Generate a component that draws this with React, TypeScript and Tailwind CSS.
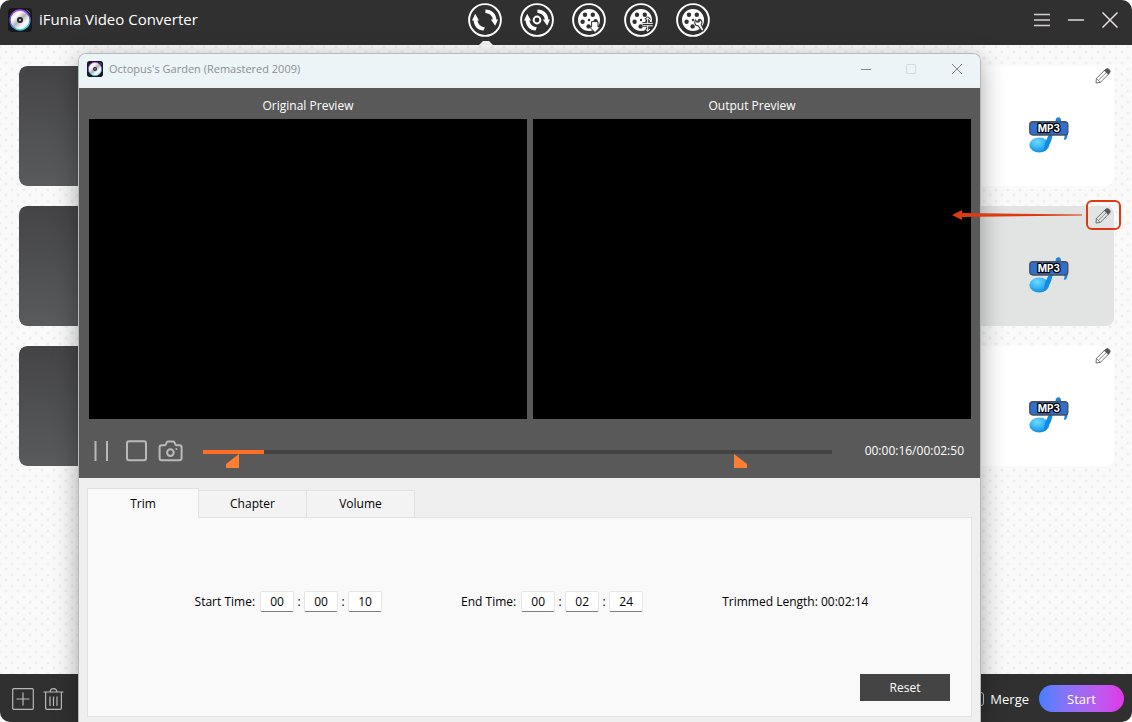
import { useState } from "react";
import type { ReactNode } from "react";

const DURATION = 170;

type Tool = {
  label: string;
  glyph: ReactNode;
};

function FilmDisc() {
  return (
    <>
      <circle cx="17" cy="17" r="11" fill="#fff" />
      <circle cx="17" cy="17" r="1.2" fill="#303030" />
      <circle cx="13" cy="11.8" r="2.2" fill="#303030" />
      <circle cx="20.8" cy="11.8" r="2.2" fill="#303030" />
      <circle cx="10.6" cy="18.8" r="2.2" fill="#303030" />
      <circle cx="16.6" cy="23.4" r="2.2" fill="#303030" />
      <circle cx="23.6" cy="18.2" r="2.2" fill="#303030" />
    </>
  );
}

function TurningArrows() {
  return (
    <>
      <path d="M5.6 16.8 C5.6 23 10 27.4 15.6 27.6 L16.8 24.2 C12.6 24 9.6 20.8 9.4 16.8 Z" />
      <path d="M4 17.4 L7.2 10.8 L11 17.4 Z" />
      <path d="M17.4 6.6 C23.8 6.6 28.4 11 28.4 17 L24.8 17 C24.8 13 21.8 10.4 17.4 10 Z" />
      <path d="M22.8 16.4 L30 16.4 L27.2 22.8 Z" />
    </>
  );
}

const tools: Tool[] = [
  { label: "Convert", glyph: <TurningArrows /> },
  {
    label: "Convert disc",
    glyph: (
      <>
        <TurningArrows />
        <circle cx="17" cy="17" r="5.6" fill="#303030" />
        <circle cx="17" cy="17" r="3.4" fill="none" stroke="#fff" strokeWidth="2" />
      </>
    ),
  },
  {
    label: "Download",
    glyph: (
      <>
        <FilmDisc />
        <path
          d="M19.6 18.6 H26 V24 H28.4 L23 29.6 L17.6 24 H19.6 Z"
          fill="#fff"
          stroke="#303030"
          strokeWidth="1"
        />
      </>
    ),
  },
  {
    label: "Compress",
    glyph: (
      <>
        <FilmDisc />
        <g fill="none" strokeLinejoin="round">
          <path
            d="M18.6 20.4 H28.8 M18.6 22.8 H28.8 M23.7 14.6 V20 M23.7 23 V28.6 M21.4 17 L23.7 14.8 L26 17 M21.4 26 L23.7 28.2 L26 26"
            stroke="#303030"
            strokeWidth="2.6"
          />
          <path
            d="M18.6 20.4 H28.8 M18.6 22.8 H28.8 M23.7 14.8 V20 M23.7 23 V28.2 M21.4 17 L23.7 14.8 L26 17 M21.4 26 L23.7 28.2 L26 26"
            stroke="#fff"
            strokeWidth="1"
          />
        </g>
      </>
    ),
  },
  {
    label: "Toolbox",
    glyph: (
      <>
        <FilmDisc />
        <path
          d="M19.6 17 L21 19.2 L23.2 18.8 L23.4 16.6 C26 17 26.6 19.8 25.2 21.6 L27.8 26.6 C27.6 28.2 26 28.4 25.2 27.4 L22.2 22.8 C19.2 23 17.6 19.6 19.6 17 Z"
          fill="#fff"
          stroke="#303030"
          strokeWidth="1.1"
        />
      </>
    ),
  },
];

function DiscLogo({ className, id }: { className: string; id: string }) {
  return (
    <svg viewBox="0 0 24 24" className={className} aria-hidden="true">
      <defs>
        <linearGradient id={`${id}-ring`} x1="0" y1="0" x2="0.3" y2="1">
          <stop offset="0" stopColor="#c04cf0" />
          <stop offset="0.5" stopColor="#6a49e8" />
          <stop offset="1" stopColor="#2ec4e0" />
        </linearGradient>
        <linearGradient id={`${id}-face`} x1="0" y1="0" x2="1" y2="1">
          <stop offset="0" stopColor="#b9bcc2" />
          <stop offset="0.3" stopColor="#ffffff" />
          <stop offset="0.5" stopColor="#b4b4b8" />
          <stop offset="0.7" stopColor="#ffffff" />
          <stop offset="1" stopColor="#b9bcc2" />
        </linearGradient>
      </defs>
      <rect width="24" height="24" rx="4" fill="#17181c" />
      <circle cx="12" cy="12" r="10" fill={`url(#${id}-face)`} stroke={`url(#${id}-ring)`} strokeWidth="1.4" />
      <circle cx="12" cy="12" r="3" fill="#22242c" />
      <circle cx="12" cy="12" r="1" fill="#d8d8dc" />
      <path d="M18.5 2 Q21 3 22 5.4" fill="none" stroke="#8a8a90" strokeWidth="0.8" />
    </svg>
  );
}

function PencilIcon() {
  return (
    <svg viewBox="0 0 16 16" className="size-4" fill="none" stroke="#636363" strokeWidth="0.9" aria-hidden="true">
      <path d="M1 15 L1.4 10.4 L10.2 1.8 L14 5.6 L5.4 14.4 Z" strokeLinejoin="round" />
      <path d="M1.4 10.4 L5.4 14.4 M3.4 12.4 L12 3.9" strokeWidth="0.7" />
      <path d="M9.4 2.6 L11.2 0.9 Q12.6 0 13.8 1.2 L14.7 2.1 Q15.8 3.4 14.8 4.6 L13.2 6.4 Z" fill="#555555" />
    </svg>
  );
}

function Mp3Icon({ id }: { id: string }) {
  return (
    <svg viewBox="-1 -1 42 38" className="h-[38px] w-[42px]" role="img" aria-label="MP3">
      <defs>
        <radialGradient id={id} cx="0.4" cy="0.3" r="0.8">
          <stop offset="0" stopColor="#6fdcff" />
          <stop offset="0.5" stopColor="#35b4f4" />
          <stop offset="1" stopColor="#0a7fd6" />
        </radialGradient>
      </defs>
      <path d="M26.6 3 Q27 0.2 29.6 0.2 Q32 0.4 32 3.6 Q32.4 8 37 12 Q40.4 17 37 22.4 L34.8 22.8 Q37 17 33 14 L27 14 Z" fill="#1587dc" />
      <path d="M27 5 L16 28 L19.4 30 Q22.6 24 24 17 Z" fill="#1587dc" />
      <ellipse cx="10.2" cy="28" rx="9.8" ry="7.6" fill={`url(#${id})`} />
      <path d="M14.6 34.4 Q20 31 23.4 18 L19.6 18 L16 26 Z" fill="#128be0" />
      <rect x="0.8" y="4.8" width="38" height="13.2" rx="3" fill="#2f6fcd" stroke="#4a4f5a" strokeWidth="1.4" />
      <text
        x="19.8"
        y="15"
        textAnchor="middle"
        fontFamily="Inter, sans-serif"
        fontSize="10"
        fontWeight="700"
        fill="#fff"
        stroke="#000"
        strokeWidth="2.4"
        paintOrder="stroke"
        strokeLinejoin="round"
      >
        MP3
      </text>
    </svg>
  );
}

function Header() {
  return (
    <header className="grid h-[45px] shrink-0 grid-cols-[10fr_242px_9fr] bg-[#303030]">
      <div className="flex items-start gap-[7px] pt-2 pl-2">
        <DiscLogo id="app" className="size-6" />
        <h1 className="mt-px text-[15px] leading-5 text-white">iFunia Video Converter</h1>
      </div>
      <nav className="flex items-start justify-between pt-[3px]" aria-label="Tools">
        {tools.map((tool, index) => (
          <button key={tool.label} type="button" aria-label={tool.label} className="relative h-[42px] w-[34px]">
            <svg viewBox="0 0 34 34" className="absolute top-0 size-[34px]" fill="#fff">
              <circle cx="17" cy="17" r="15.9" fill="none" stroke="#fff" strokeWidth="1.9" />
              {tool.glyph}
            </svg>
            {index === 0 && (
              <svg viewBox="0 0 14 4" className="absolute bottom-0 left-[11px] h-1 w-3.5" fill="#f4f4f4">
                <path d="M0 4 L4 0 H10 L14 4 Z" />
              </svg>
            )}
          </button>
        ))}
      </nav>
      <div className="flex items-center justify-end gap-[18px] pr-3.5 pb-[5px]">
        <button type="button" aria-label="Menu">
          <svg viewBox="0 0 16 16" className="size-4" stroke="#d6cfcf" strokeWidth="1.4">
            <path d="M0 2.5 H16 M0 8 H16 M0 13.5 H16" />
          </svg>
        </button>
        <button type="button" aria-label="Minimize">
          <svg viewBox="0 0 16 16" className="size-4" stroke="#b5aeae" strokeWidth="2">
            <path d="M0 8 H16" />
          </svg>
        </button>
        <button type="button" aria-label="Close">
          <svg viewBox="0 0 16 16" className="size-4" stroke="#e6dfdf" strokeWidth="1.5">
            <path d="M0.5 0.5 L15.5 15.5 M15.5 0.5 L0.5 15.5" />
          </svg>
        </button>
      </div>
    </header>
  );
}

function MediaRow({ id, selected }: { id: string; selected: boolean }) {
  return (
    <li className={`flex h-[120px] overflow-hidden rounded-lg ${selected ? "bg-[#e2e4e3]" : "bg-white"}`}>
      <div className="w-40 rounded-lg bg-linear-to-b from-[#444446] to-[#5a5b5d]" />
      <div className="ml-auto flex w-[130px] flex-col items-center gap-8 pt-0.5">
        <button type="button" aria-label="Edit" className="mr-[3px] self-end">
          <PencilIcon />
        </button>
        <Mp3Icon id={id} />
      </div>
    </li>
  );
}

function Footer() {
  return (
    <footer className="flex h-12 shrink-0 items-center bg-[#303030] pt-px pr-2 pl-3 text-white">
      <button type="button" aria-label="Add file">
        <svg viewBox="0 0 22 22" className="size-[22px]" fill="none" stroke="#b8b8b8" strokeWidth="1.2">
          <rect x="0.7" y="0.7" width="20.6" height="20.6" rx="1" />
          <path d="M4.5 11 H17.5 M11 4.5 V17.5" />
        </svg>
      </button>
      <button type="button" aria-label="Delete" className="ml-[9px]">
        <svg viewBox="0 0 22 22" className="size-[22px]" fill="none" stroke="#b8b8b8" strokeWidth="1.2">
          <path d="M0.5 4 H20.5 M2.6 4 V20 Q2.6 21.4 4 21.4 H17 Q18.4 21.4 18.4 20 V4 M7 4 Q7.4 0.7 10.5 0.7 Q13.6 0.7 14 4" />
          <path d="M7 8.5 V18 M10.5 8.5 V18 M14 8.5 V18" />
        </svg>
      </button>
      <label className="ml-auto flex items-center gap-1.5 text-[13px] leading-5">
        <input
          type="checkbox"
          className="size-3.5 appearance-none rounded-[3px] border border-[#c8c8c8] checked:bg-[#4080ff]"
        />
        Merge
      </label>
      <button
        type="button"
        className="ml-2.5 h-[27px] w-[85px] rounded-full bg-linear-to-r from-[#4080ff] to-[#e035e8] text-[13px] leading-5"
      >
        Start
      </button>
    </footer>
  );
}

function PlayerControls() {
  const [current, setCurrent] = useState(16.5);
  const start = 9.7;
  const end = 143.5;
  const played = (current / DURATION) * 100;

  return (
    <div className="flex h-[59px] items-center pt-[5px] pr-[7px] pl-1">
      <div className="flex items-center text-[#b9b9b9]">
        <button type="button" aria-label="Pause">
          <svg viewBox="0 0 18 24" className="h-6 w-[18px]" fill="none" stroke="currentColor" strokeWidth="2">
            <path d="M2.5 2 V22 M14 2 V22" />
          </svg>
        </button>
        <button type="button" aria-label="Stop" className="ml-3.5">
          <svg viewBox="0 0 24 24" className="size-6" fill="none" stroke="currentColor" strokeWidth="2">
            <rect x="2" y="2.2" width="19" height="19" rx="2" />
          </svg>
        </button>
        <button type="button" aria-label="Snapshot" className="ml-2">
          <svg viewBox="0 0 26 24" className="h-6 w-[26px]" fill="none" stroke="currentColor" strokeWidth="2">
            <path
              d="M4.6 6.2 H7.6 Q8.6 6.2 9 5.1 L9.6 3.5 Q10 2.5 11 2.5 H16.2 Q17.2 2.5 17.6 3.5 L18.2 5.1 Q18.6 6.2 19.6 6.2 H22.6 Q24.6 6.2 24.6 8.2 V19.3 Q24.6 21.3 22.6 21.3 H4.6 Q2.6 21.3 2.6 19.3 V8.2 Q2.6 6.2 4.6 6.2 Z"
              strokeLinejoin="round"
            />
            <circle cx="13.4" cy="13.6" r="3.3" />
            <circle cx="19.4" cy="10.1" r="1" fill="currentColor" stroke="none" />
          </svg>
        </button>
      </div>
      <div className="relative mt-0.5 ml-5 flex h-1 flex-1">
        <input
          type="range"
          aria-label="Position"
          min={0}
          max={DURATION}
          step={0.5}
          value={current}
          onChange={(event) => setCurrent(Number(event.target.value))}
          className="h-1 w-full appearance-none [&::-webkit-slider-thumb]:size-0 [&::-webkit-slider-thumb]:appearance-none"
          style={{ background: `linear-gradient(to right, #ff6e22 ${played}%, #444444 ${played}%)` }}
        />
        <svg
          viewBox="0 0 13 14"
          className="absolute top-1 h-3.5 w-[13px] -translate-x-full"
          style={{ left: `${(start / DURATION) * 100}%` }}
          fill="#ff7f32"
        >
          <path d="M13 0 V14 H0 V10 Z" />
        </svg>
        <svg
          viewBox="0 0 13 14"
          className="absolute top-1 h-3.5 w-[13px]"
          style={{ left: `${(end / DURATION) * 100}%` }}
          fill="#ff7f32"
        >
          <path d="M0 0 V14 H13 V10 Z" />
        </svg>
      </div>
      <output className="ml-[33px] text-[12px] leading-4 whitespace-nowrap">00:00:16/00:02:50</output>
    </div>
  );
}

type TimeFieldProps = {
  label: string;
  values: string[];
};

function TimeField({ label, values }: TimeFieldProps) {
  return (
    <fieldset className="flex items-center">
      <legend className="float-left mr-[5px] whitespace-nowrap">{label}:</legend>
      {values.map((value, index) => (
        <span key={index} className="flex items-center">
          {index > 0 && <span className="w-2.5 text-center">:</span>}
          <input
            type="text"
            aria-label={`${label} ${["hours", "minutes", "seconds"][index]}`}
            defaultValue={value}
            className="h-[21px] w-[34px] rounded-xs border border-[#e6e6e6] border-b-[#7c7c7c] bg-white text-center text-[12px] leading-4"
          />
        </span>
      ))}
    </fieldset>
  );
}

const tabs = ["Trim", "Chapter", "Volume"];

function TrimSettings() {
  const [active, setActive] = useState("Trim");

  return (
    <div className="flex flex-1 flex-col bg-[#efefef] px-2 pt-2.5 pb-[5px]">
      <div role="tablist" className="relative flex items-end">
        {tabs.map((tab) => (
          <button
            key={tab}
            type="button"
            role="tab"
            aria-selected={tab === active}
            onClick={() => setActive(tab)}
            className={
              tab === active
                ? "-mb-px h-[30px] w-[112px] border border-b-0 border-[#e2e2e2] bg-[#f9f9f9]"
                : "h-[27px] w-[108px] border-t border-r border-[#e2e2e2] bg-[#f3f3f3]"
            }
          >
            {tab}
          </button>
        ))}
      </div>
      <div role="tabpanel" className="flex flex-1 flex-col border border-[#e2e2e2] bg-[#f9f9f9] pt-[73px] pr-[21px] pb-[15px] pl-[25px]">
        <div className="flex items-center justify-center gap-[79px]">
          <TimeField label="Start Time" values={["00", "00", "10"]} />
          <TimeField label="End Time" values={["00", "02", "24"]} />
          <p className="whitespace-nowrap">Trimmed Length: 00:02:14</p>
        </div>
        <button type="button" className="mt-auto h-[27px] w-[90px] self-end bg-[#444444] text-white">
          Reset
        </button>
      </div>
    </div>
  );
}

function EditDialog() {
  return (
    <div
      role="dialog"
      aria-label="Octopus's Garden (Remastered 2009)"
      className="flex flex-1 flex-col overflow-hidden rounded-t-lg border border-b-0 border-[#b4b8ba] text-[12px] leading-4 shadow-[0_6px_24px_rgba(0,0,0,0.35)]"
    >
      <div className="flex h-[34px] items-center border-b-4 border-[#f0f0f0] bg-[#ebf4f7] pr-[17px] pl-2 text-[#8c9092]">
        <DiscLogo id="dialog" className="size-4" />
        <span className="ml-1.5 text-[11px]">Octopus's Garden (Remastered 2009)</span>
        <div className="ml-auto flex items-center gap-[33px] pb-px">
          <button type="button" aria-label="Minimize">
            <svg viewBox="0 0 12 12" className="size-3" stroke="#85898b" strokeWidth="1">
              <path d="M0 6.5 H10" />
            </svg>
          </button>
          <button type="button" aria-label="Maximize" disabled>
            <svg viewBox="0 0 12 12" className="size-3" fill="none" stroke="#d2dadd" strokeWidth="1">
              <rect x="0.5" y="1.5" width="9" height="9" rx="0.5" />
            </svg>
          </button>
          <button type="button" aria-label="Close">
            <svg viewBox="0 0 12 12" className="size-3" stroke="#85898b" strokeWidth="1">
              <path d="M1 1 L11 11 M11 1 L1 11" />
            </svg>
          </button>
        </div>
      </div>
      <div className="bg-[#595959] pr-[9px] pl-2.5 text-white">
        <div className="flex gap-1.5">
          <figure className="flex-1">
            <figcaption className="pt-2.5 pb-[5px] text-center">Original Preview</figcaption>
            <div className="h-[300px] bg-black" />
          </figure>
          <figure className="flex-1">
            <figcaption className="pt-2.5 pb-[5px] text-center">Output Preview</figcaption>
            <div className="h-[300px] bg-black" />
          </figure>
        </div>
        <PlayerControls />
      </div>
      <TrimSettings />
    </div>
  );
}

function EditCallout() {
  return (
    <div className="pointer-events-none absolute top-[200px] right-[11px] flex items-center gap-1">
      <svg viewBox="0 0 130 10" className="h-2.5 w-[130px]" fill="#dc3b12" aria-hidden="true">
        <path d="M0 5 L10 0 V3 L130 4.5 V5.5 L10 7 V10 Z" />
      </svg>
      <div className="h-[30px] w-[35px] rounded-md border-2 border-[#dc3b12]" />
    </div>
  );
}

export default function App() {
  return (
    <div className="relative flex min-h-screen flex-col overflow-hidden rounded-[10px] bg-[#fafafa] font-['Open_Sans','Noto_Sans',sans-serif] text-black">
      <Header />
      <main className="flex-1 bg-[radial-gradient(circle_at_6px_7px,#efefef_1px,transparent_2px),radial-gradient(circle_at_6px_7px,#efefef_1px,transparent_2px)] bg-[length:12px_11px] bg-[position:0_0,6px_-5px] pt-[21px] pr-[18px] pl-[19px]">
        <ul className="flex flex-col gap-5">
          <MediaRow id="note-1" selected={false} />
          <MediaRow id="note-2" selected />
          <MediaRow id="note-3" selected={false} />
        </ul>
      </main>
      <Footer />
      <div className="absolute inset-0 flex pt-[53px] pr-[151px] pl-[78px]">
        <EditDialog />
      </div>
      <EditCallout />
    </div>
  );
}
